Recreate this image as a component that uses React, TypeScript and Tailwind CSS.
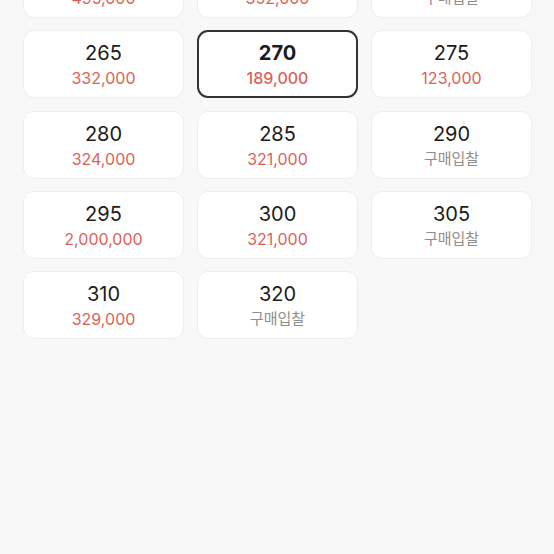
import React from 'react';

interface SizeOption {
  size: string;
  price: string | null;
}

const sizes: SizeOption[] = [
  { size: '250', price: '495,000' },
  { size: '255', price: '352,000' },
  { size: '260', price: null },
  { size: '265', price: '332,000' },
  { size: '270', price: '189,000' },
  { size: '275', price: '123,000' },
  { size: '280', price: '324,000' },
  { size: '285', price: '321,000' },
  { size: '290', price: null },
  { size: '295', price: '2,000,000' },
  { size: '300', price: '321,000' },
  { size: '305', price: null },
  { size: '310', price: '329,000' },
  { size: '320', price: null },
];

const selectedSize = '270';

export default function App() {
  return (
    <div className="w-[554px] h-[554px] overflow-hidden bg-[#f8f8f8] font-['Inter','Noto_Sans_CJK_KR',sans-serif]">
      {/* list is scrolled: first row sits partly above the viewport */}
      <div className="grid grid-cols-3 gap-x-[13px] gap-y-[12.3px] pl-[23px] pr-[22px] mt-[-50px]">
        {sizes.map((item) => {
          const selected = item.size === selectedSize;
          return (
            <div
              key={item.size}
              className={`h-[68px] pt-[2px] rounded-[11px] bg-white flex flex-col items-center justify-center ${
                selected ? 'border-2 border-[#333333]' : 'border border-[#eeeeee]'
              }`}
            >
              <span
                className={`text-[20px] leading-[23px] text-[#1c1c1c] ${selected ? 'font-bold' : 'font-normal'}`}
              >
                {item.size}
              </span>
              {item.price ? (
                <span
                  className={`mt-[3px] text-[16px] leading-[20px] text-[#dc6259] ${selected ? 'font-medium' : ''}`}
                >
                  {item.price}
                </span>
              ) : (
                <span className="mt-[3px] text-[15px] leading-[20px] text-[#8e8e8e]">구매입찰</span>
              )}
            </div>
          );
        })}
      </div>
    </div>
  );
}
